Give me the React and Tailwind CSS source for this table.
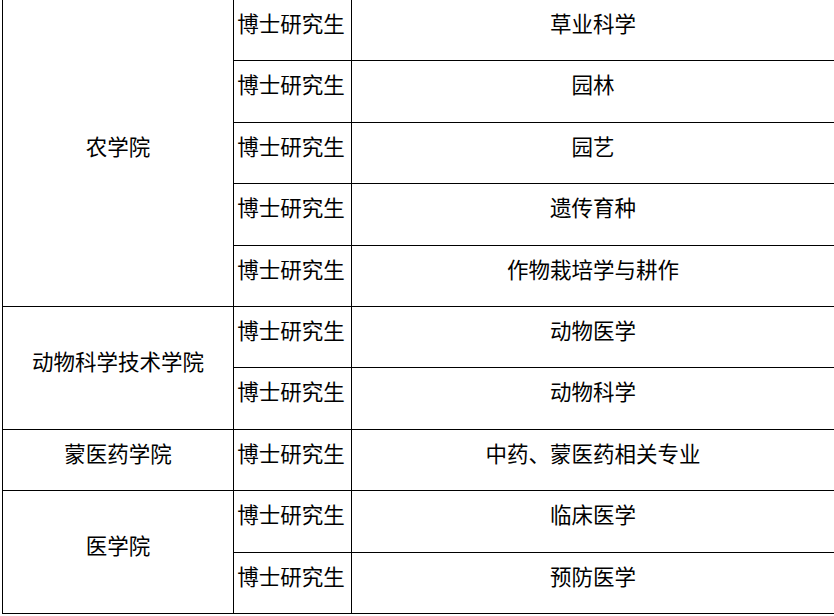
const rows = [
  ["博士研究生", "草业科学"],
  ["博士研究生", "园林"],
  ["博士研究生", "园艺"],
  ["博士研究生", "遗传育种"],
  ["博士研究生", "作物栽培学与耕作"],
  ["博士研究生", "动物医学"],
  ["博士研究生", "动物科学"],
  ["博士研究生", "中药、蒙医药相关专业"],
  ["博士研究生", "临床医学"],
  ["博士研究生", "预防医学"],
];

const colleges = [
  { name: "农学院", span: "row-span-5" },
  { name: "动物科学技术学院", span: "row-span-2" },
  { name: "蒙医药学院", span: "row-span-1" },
  { name: "医学院", span: "row-span-2" },
];

// row index where each college starts
const starts = [0, 5, 7, 8];

export default function App() {
  return (
    <div
      className="w-[834px] h-[616px] overflow-hidden bg-white text-black pl-[2px]"
      style={{ fontFamily: '"Noto Sans CJK SC", "Noto Sans", sans-serif' }}
    >
      <div className="grid grid-cols-[231px_118px_483px] grid-rows-[repeat(10,61.4px)] text-[21.5px] leading-none">
        {rows.map(([degree, major], i) => {
          const c = starts.indexOf(i);
          return [
            c >= 0 ? (
              <div
                key={`c${i}`}
                className={`${colleges[c].span} col-start-1 border-l border-b border-black flex items-center justify-center pb-[14px]`}
              >
                {colleges[c].name}
              </div>
            ) : null,
            <div
              key={`d${i}`}
              className="col-start-2 border-l border-b border-black flex justify-center pt-[12px] pr-[3px]"
            >
              {degree}
            </div>,
            <div
              key={`m${i}`}
              className="col-start-3 border-l border-b border-black flex justify-center pt-[12px]"
            >
              {major}
            </div>,
          ];
        })}
      </div>
    </div>
  );
}
